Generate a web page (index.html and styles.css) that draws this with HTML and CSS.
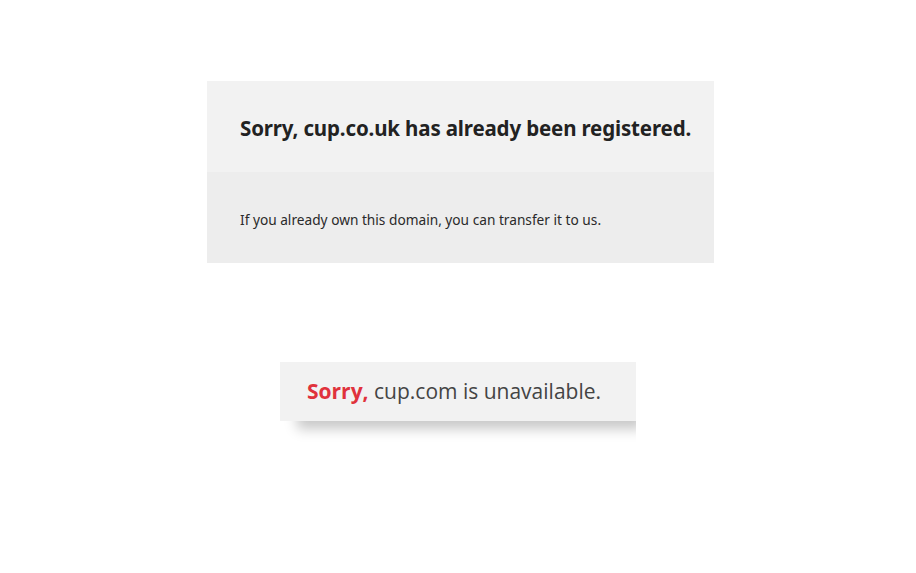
FILE: index.html
```html
<!DOCTYPE html>
<html lang="en">
<head>
  <meta charset="UTF-8">
  <title>Domain unavailable</title>
  <link rel="stylesheet" href="styles.css">
</head>
<body>

  <div class="page">
    <div class="notice">
      <div class="notice-head">
        <h2>Sorry, cup.co.uk has already been registered.</h2>
      </div>
      <div class="notice-body">
        <p>If you already own this domain, you can transfer it to us.</p>
      </div>
    </div>

    <div class="result-wrap">
      <div class="result">
        <span class="sorry">Sorry,</span> cup.com is unavailable.
      </div>
    </div>
  </div>

</body>
</html>
```

FILE: styles.css
```css
body {
  margin: 0;
  background: #fff;
  font-family: "Noto Sans", sans-serif;
  color: #222;
}

.page {
  display: flex;
  flex-direction: column;
  align-items: center;
  padding-top: 81px;
}

.notice {
  width: 507px;
  margin-left: 5px;
}

.notice-head {
  background: #f2f2f2;
  height: 91px;
  padding: 2px 16px 0 33px;
  box-sizing: border-box;
  display: flex;
  align-items: center;
}

.notice-head h2 {
  margin: 0;
  font-size: 20.5px;
  font-weight: 700;
  letter-spacing: -0.15px;
  white-space: nowrap;
  color: #222;
}

.notice-body {
  background: #ededed;
  height: 91px;
  padding: 4px 33px 0;
  box-sizing: border-box;
  display: flex;
  align-items: center;
}

.notice-body p {
  margin: 0;
  font-size: 13.7px;
  color: #2a2a2a;
}

/* clips the shadow at the box's right edge */
.result-wrap {
  margin-top: 99px;
  width: 356px;
  overflow: hidden;
  padding-bottom: 26px;
}

.result {
  box-sizing: border-box;
  padding: 15px 27px 16px;
  background: #f2f2f2;
  font-family: "Open Sans", sans-serif;
  font-size: 21px;
  color: #444;
  box-shadow: 12px 13px 12px -5px rgba(0, 0, 0, 0.22);
}

.sorry {
  color: #e0323c;
  font-weight: 700;
}
```
